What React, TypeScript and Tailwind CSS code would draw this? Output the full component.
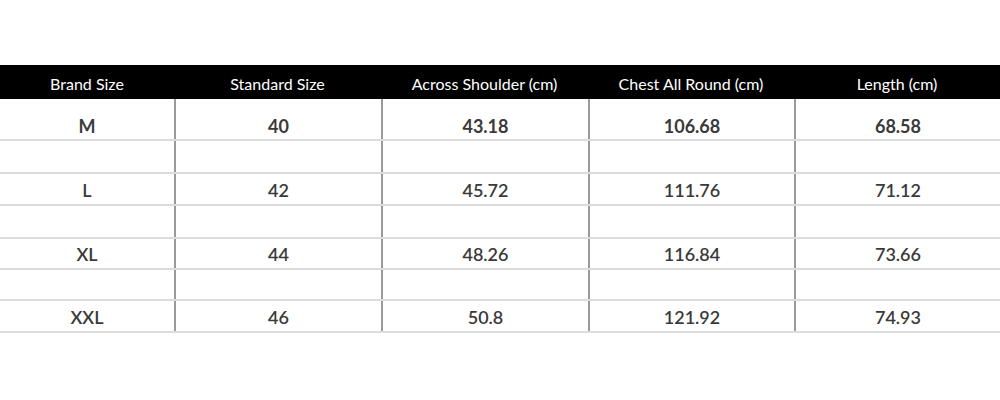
import React from "react";

const headers = ["Brand Size", "Standard Size", "Across Shoulder (cm)", "Chest All Round (cm)", "Length (cm)"];

const rows: { cells: string[]; bold: boolean; h: string; pad: string }[] = [
  { cells: ["M", "40", "43.18", "106.68", "68.58"], bold: true, h: "h-[42px]", pad: "pt-[14px]" },
  { cells: ["", "", "", "", ""], bold: false, h: "h-[33px]", pad: "" },
  { cells: ["L", "42", "45.72", "111.76", "71.12"], bold: false, h: "h-[32px]", pad: "pt-[1px]" },
  { cells: ["", "", "", "", ""], bold: false, h: "h-[33px]", pad: "" },
  { cells: ["XL", "44", "48.26", "116.84", "73.66"], bold: false, h: "h-[31px]", pad: "" },
  { cells: ["", "", "", "", ""], bold: false, h: "h-[31px]", pad: "" },
  { cells: ["XXL", "46", "50.8", "121.92", "74.93"], bold: false, h: "h-[32px]", pad: "pt-[1px]" },
];

const grid = "grid grid-cols-[174px_207px_207px_206px_206px]";

export default function App() {
  return (
    <div className="w-[1000px] h-[400px] bg-white pt-[65px]" style={{ fontFamily: "Lato, 'Open Sans', sans-serif" }}>
      <div className={`${grid} h-[34px] bg-black text-white text-[16px]`}>
        {headers.map((h) => (
          <div key={h} className="flex items-center justify-center pt-[3px]">
            {h}
          </div>
        ))}
      </div>
      {rows.map((r, i) => (
        <div key={i} className={`${grid} ${r.h} border-b-2 border-[#dcdcdc]`}>
          {r.cells.map((c, j) => (
            <div
              key={j}
              className={`flex items-center justify-center text-[18px] leading-none text-[#3a3a3a] ${r.pad} ${
                j > 0 ? "border-l-2 border-[#9a9a9a]" : ""
              } ${r.bold ? "font-bold" : "font-semibold"}`}
            >
              {c}
            </div>
          ))}
        </div>
      ))}
    </div>
  );
}
